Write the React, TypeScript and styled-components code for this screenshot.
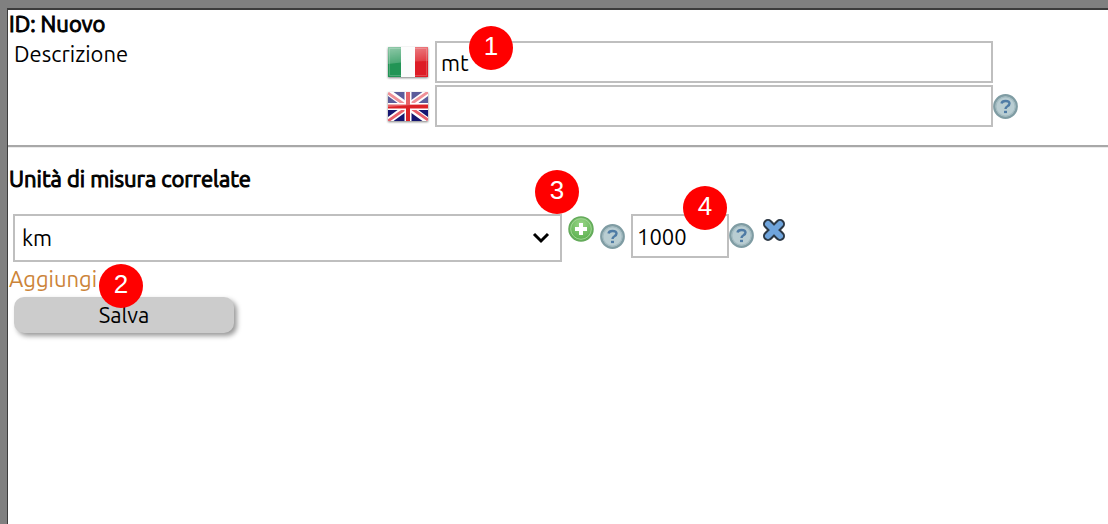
import React from 'react';
import styled, { createGlobalStyle } from 'styled-components';

const GlobalStyle = createGlobalStyle`
  * { box-sizing: border-box; }
  body {
    margin: 0;
    background: #808080;
    color: #000;
    font: 22px/28px Ubuntu, "Noto Sans", sans-serif;
  }
  input, select, button { font: inherit; color: inherit; }
`;

const Page = styled.div`
  min-height: 100vh;
  padding: 8px 0 0 7px;
  display: flex;
`;

const Panel = styled.form`
  flex: 1;
  min-width: 0;
  background: #fff;
  border: solid #3c3c3c;
  border-width: 2px 0 0 1px;
`;

const Heading = styled.h2`
  margin: 0;
  padding-left: 1px;
  font-size: 22px;
  line-height: 28px;
  font-weight: 400;
  -webkit-text-stroke: 1px #000;
`;

const Description = styled.div`
  display: flex;
  align-items: flex-start;
  padding: 2px 0 18px 6px;
`;

const DescriptionLabel = styled.label`
  flex: 0 0 372px;
`;

const Translations = styled.div`
  display: flex;
  flex-direction: column;
  gap: 2px;
  padding-top: 1px;
`;

const Translation = styled.div`
  display: flex;
  align-items: center;
  svg { flex: none; }
`;

const FieldBox = styled.span<{ $width: number }>`
  position: relative;
  flex: 0 0 ${(p) => p.$width}px;
`;

const TextInput = styled.input<{ $tall?: boolean }>`
  display: block;
  width: 100%;
  height: ${(p) => (p.$tall ? 44 : 42)}px;
  padding: 0 4px;
  border: 2px solid #bfbfbf;
  border-radius: 0;
  background: #fff;
  outline: none;
`;

const Divider = styled.hr`
  margin: 0 0 17px;
  border: solid;
  border-width: 2px 0 1px;
  border-color: #a8a8a8 #ebebeb #ebebeb;
`;

const UnitRow = styled.div`
  display: flex;
  align-items: flex-start;
  padding: 21px 0 3px 5px;
`;

const UnitSelect = styled.select`
  display: block;
  appearance: none;
  width: 100%;
  height: 48px;
  padding: 0 7px;
  border: 2px solid #bfbfbf;
  border-radius: 0;
  background: #fff;
  outline: none;
`;

const Chevron = styled.svg`
  position: absolute;
  right: 12px;
  top: 18px;
  pointer-events: none;
`;

const IconButton = styled.button<{ $top: number; $left?: number; $right?: number }>`
  flex: none;
  display: block;
  margin: ${(p) => p.$top}px ${(p) => p.$right ?? 0}px 0 ${(p) => p.$left ?? 0}px;
  padding: 0;
  border: 0;
  background: none;
  cursor: pointer;
  svg { display: block; }
`;

const AddLine = styled.div`
  display: flex;
  padding-left: 1px;
`;

const AddLink = styled.a`
  position: relative;
  color: #cc8439;
  text-decoration: none;
`;

const SaveButton = styled.button`
  display: block;
  width: 220px;
  height: 36px;
  margin: 4px 0 0 6px;
  padding: 0;
  border: 0;
  border-radius: 10px;
  background: #ccc;
  box-shadow: 3px 3px 5px rgba(0, 0, 0, 0.4);
  cursor: pointer;
`;

const Badge = styled.span<{ $left: number; $top: number }>`
  position: absolute;
  z-index: 1;
  left: ${(p) => p.$left}px;
  top: ${(p) => p.$top}px;
  width: 44px;
  height: 44px;
  border-radius: 50%;
  background: #f00;
  color: #fff;
  font: 26px/40px "Liberation Sans", Arial, sans-serif;
  text-align: center;
`;

const ItalianFlag = () => (
  <svg width="49" height="38" viewBox="0 0 49 38" role="img" aria-label="Italiano">
    <defs>
      <linearGradient id="gloss" x1="0" y1="0" x2="0.4" y2="1">
        <stop offset="0" stopColor="#fff" stopOpacity=".5" />
        <stop offset="1" stopColor="#fff" stopOpacity=".15" />
      </linearGradient>
      <filter id="flagShadow" x="-10%" y="-10%" width="120%" height="130%">
        <feDropShadow dx="0" dy="1" stdDeviation="1" floodOpacity=".5" />
      </filter>
    </defs>
    <g filter="url(#flagShadow)">
      <path fill="#fcfcfc" d="M2 4h40v30H2z" />
      <path fill="#229455" d="M2 4h13v30H2z" />
      <path fill="#dd1d25" d="M29 4h13v30H29z" />
      <path fill="url(#gloss)" d="M2 4h40v14Q22 18 2 21z" />
      <path fill="none" stroke="#fff" strokeOpacity=".2" d="M3.500 5.500h37v27h-37z" />
    </g>
  </svg>
);

const BritishFlag = () => (
  <svg width="49" height="38" viewBox="0 0 49 38" role="img" aria-label="English">
    <g filter="url(#flagShadow)">
      <svg x="2" y="5" width="40" height="29" viewBox="0 0 40 29">
        <path fill="#151570" d="M0 0h40v29H0z" />
        <path stroke="#fff" strokeWidth="6.500" d="M0 0l40 29M40 0L0 29" />
        <path stroke="#e8606a" strokeWidth="2.800" d="M0 1l20 14M40 0L20 14M0 29l20-14M40 28L20 14" />
        <path stroke="#fff" strokeWidth="7" d="M20 0v29M0 14.500h40" />
        <path stroke="#dc2027" strokeWidth="4" d="M20 0v29M0 14.500h40" />
        <path fill="#fff" fillOpacity=".3" d="M0 0h40v12Q20 13 0 15z" />
      </svg>
    </g>
  </svg>
);

const HelpIcon = () => (
  <svg width="25" height="25" viewBox="0 0 25 25" aria-hidden="true">
    <circle cx="12.500" cy="12.500" r="11.200" fill="#b9cdd2" stroke="#7f9ca3" strokeWidth="2.400" />
    <circle cx="12.500" cy="12.500" r="9.600" fill="none" stroke="#a3bbc1" strokeWidth="1.200" />
    <path fill="none" stroke="#4f7ba5" strokeWidth="2.400" d="M8.500 9.500Q9 7 12.500 7q4 0 4 2.600 0 1.700-2 2.600-2 1-2 2.900" />
    <path fill="#4f7ba5" d="M11 16.800h3v2.300h-3z" />
  </svg>
);

const PlusIcon = () => (
  <svg width="26" height="26" viewBox="0 0 26 26" aria-hidden="true">
    <defs>
      <radialGradient id="green" cx=".5" cy=".3" r=".7">
        <stop offset="0" stopColor="#9ad688" />
        <stop offset="1" stopColor="#56ad4a" />
      </radialGradient>
    </defs>
    <circle cx="13" cy="13" r="12" fill="url(#green)" stroke="#64aa5b" strokeWidth="1.500" />
    <circle cx="13" cy="13" r="10.300" fill="none" stroke="#a0d494" />
    <path stroke="#fff" strokeWidth="4" d="M13 7v12M7 13h12" />
  </svg>
);

const DeleteIcon = () => (
  <svg width="24" height="28" viewBox="0 0 24 28" aria-hidden="true">
    <g strokeLinecap="round">
      <path stroke="#2c3845" strokeWidth="10" d="M6 8l12 12M18 8L6 20" />
      <path stroke="#6fa4dc" strokeWidth="6" d="M6 8l12 12M18 8L6 20" />
    </g>
  </svg>
);

export default function App() {
  return (
    <>
      <GlobalStyle />
      <Page>
        <Panel onSubmit={(e) => e.preventDefault()}>
          <Heading>ID: Nuovo</Heading>
          <Description>
            <DescriptionLabel htmlFor="desc-it">Descrizione</DescriptionLabel>
            <Translations>
              <Translation>
                <ItalianFlag />
                <FieldBox $width={558}>
                  <TextInput id="desc-it" defaultValue="mt" />
                  <Badge $left={34} $top={-15}>1</Badge>
                </FieldBox>
              </Translation>
              <Translation>
                <BritishFlag />
                <FieldBox $width={558}>
                  <TextInput aria-label="Descrizione in inglese" />
                </FieldBox>
                <IconButton type="button" aria-label="Aiuto" $top={0}><HelpIcon /></IconButton>
              </Translation>
            </Translations>
          </Description>
          <Divider />
          <Heading>Unità di misura correlate</Heading>
          <UnitRow>
            <FieldBox $width={549}>
              <UnitSelect aria-label="Unità di misura" defaultValue="km">
                <option>km</option>
              </UnitSelect>
              <Chevron width="18" height="12" viewBox="0 0 18 12" aria-hidden="true">
                <path d="M2 2l7 7 7-7" fill="none" stroke="#000" strokeWidth="3" />
              </Chevron>
              <Badge $left={522} $top={-44}>3</Badge>
            </FieldBox>
            <IconButton type="button" aria-label="Aggiungi unità" $top={2} $left={6} $right={6}><PlusIcon /></IconButton>
            <IconButton type="button" aria-label="Aiuto" $top={10} $right={6}><HelpIcon /></IconButton>
            <FieldBox $width={98}>
              <TextInput $tall aria-label="Fattore di conversione" defaultValue="1000" />
              <Badge $left={52} $top={-28}>4</Badge>
            </FieldBox>
            <IconButton type="button" aria-label="Aiuto" $top={9} $right={8}><HelpIcon /></IconButton>
            <IconButton type="button" aria-label="Elimina" $top={2}><DeleteIcon /></IconButton>
          </UnitRow>
          <AddLine>
            <AddLink href="#">
              Aggiungi
              <Badge $left={90} $top={-1}>2</Badge>
            </AddLink>
          </AddLine>
          <SaveButton type="submit">Salva</SaveButton>
        </Panel>
      </Page>
    </>
  );
}
